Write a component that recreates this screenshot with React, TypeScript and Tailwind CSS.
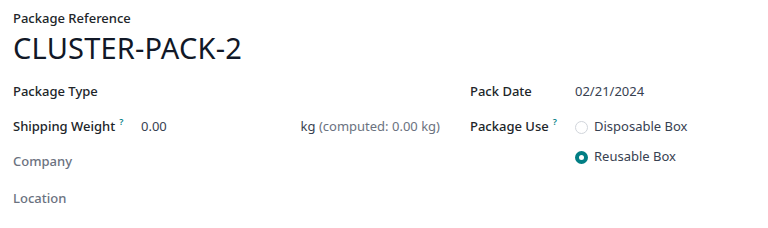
import React from "react";

const font = { fontFamily: '"Noto Sans", "Open Sans", sans-serif' };

function Help() {
  return <span className="ml-[4px] text-[9px] font-semibold text-[#017e84] leading-none self-start mt-[-1px]">?</span>;
}

function Radio({ checked, label }: { checked?: boolean; label: string }) {
  return (
    <div className="flex items-center h-[30px]">
      {checked ? (
        <span className="w-[13px] h-[13px] rounded-full border-[4px] border-[#017e84] bg-white box-border" />
      ) : (
        <span className="w-[13px] h-[13px] rounded-full border border-[#d1d5db] bg-white box-border" />
      )}
      <span className="ml-[6px] text-[13px] text-[#374151]">{label}</span>
    </div>
  );
}

export default function App() {
  return (
    <div className="w-[768px] h-[228px] bg-white text-[#1f2937] overflow-hidden" style={font}>
      <div className="pl-[13px] pt-[9px]">
        <div className="text-[13px] font-medium text-[#212529] leading-[19px]">Package Reference</div>
        <div className="text-[29px] leading-[34px] text-[#111827] mt-[3px] tracking-[0.2px]">CLUSTER-PACK-2</div>
      </div>
      <div className="flex pl-[13px] mt-[12px]">
        <div className="w-[457px] flex flex-col">
          <div className="flex items-center h-[30px]">
            <div className="w-[128px] text-[13px] font-medium text-[#212529]">Package Type</div>
          </div>
          <div className="flex items-center h-[40px]">
            <div className="w-[128px] text-[13px] font-medium text-[#212529] flex items-center h-[18px]">
              Shipping Weight<Help />
            </div>
            <div className="flex-1 flex items-center text-[13px]">
              <span className="text-[#374151]">0.00</span>
              <span className="ml-auto mr-[30px] text-[#374151]">
                kg <span className="text-[#6b7280]">(computed: 0.00 kg)</span>
              </span>
            </div>
          </div>
          <div className="flex items-center h-[30px]">
            <div className="w-[128px] text-[13px] font-medium text-[#6b7280]">Company</div>
          </div>
          <div className="flex items-center h-[44px]">
            <div className="w-[128px] text-[13px] font-medium text-[#6b7280]">Location</div>
          </div>
        </div>
        <div className="flex-1 flex flex-col">
          <div className="flex items-center h-[30px]">
            <div className="w-[105px] text-[13px] font-medium text-[#212529]">Pack Date</div>
            <div className="text-[13px] text-[#374151]">02/21/2024</div>
          </div>
          <div className="flex mt-[5px]">
            <div className="w-[105px] h-[30px] flex items-center">
              <div className="text-[13px] font-medium text-[#212529] flex items-center h-[18px]">
                Package Use<Help />
              </div>
            </div>
            <div className="flex flex-col">
              <Radio label="Disposable Box" />
              <Radio checked label="Reusable Box" />
            </div>
          </div>
        </div>
      </div>
    </div>
  );
}
